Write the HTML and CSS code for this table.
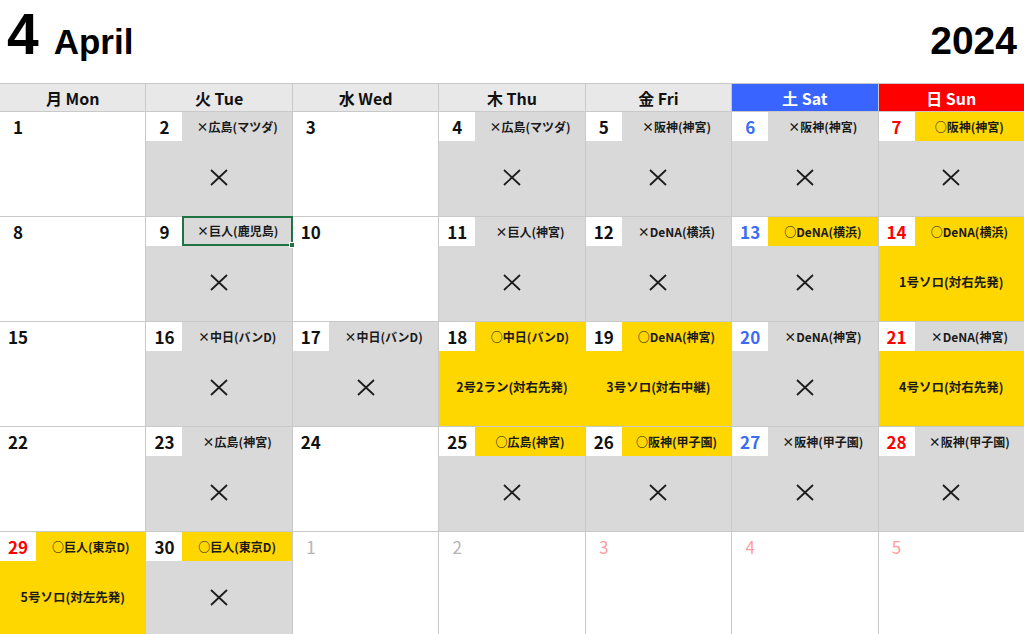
FILE: index.html
```html
<!DOCTYPE html>
<html lang="ja">
<head>
<meta charset="utf-8">
<link rel="stylesheet" href="styles.css">
</head>
<body>
<div class="title">
  <span class="mnum">4</span><span class="mname">April</span><span class="year">2024</span>
</div>
<div class="cal">
  <div class="hd">月 Mon</div>
  <div class="hd">火 Tue</div>
  <div class="hd">水 Wed</div>
  <div class="hd">木 Thu</div>
  <div class="hd">金 Fri</div>
  <div class="hd sat">土 Sat</div>
  <div class="hd sun">日 Sun</div>

  <!-- week 1 -->
  <div class="cell"><div class="num">1</div></div>
  <div class="cell"><div class="num">2</div><div class="lbl g">×広島(マツダ)</div><div class="body g"><svg class="x" viewBox="0 0 18 17"><path d="M1 1L17 16M17 1L1 16"/></svg></div></div>
  <div class="cell"><div class="num">3</div></div>
  <div class="cell"><div class="num">4</div><div class="lbl g">×広島(マツダ)</div><div class="body g"><svg class="x" viewBox="0 0 18 17"><path d="M1 1L17 16M17 1L1 16"/></svg></div></div>
  <div class="cell"><div class="num">5</div><div class="lbl g">×阪神(神宮)</div><div class="body g"><svg class="x" viewBox="0 0 18 17"><path d="M1 1L17 16M17 1L1 16"/></svg></div></div>
  <div class="cell"><div class="num blue">6</div><div class="lbl g">×阪神(神宮)</div><div class="body g"><svg class="x" viewBox="0 0 18 17"><path d="M1 1L17 16M17 1L1 16"/></svg></div></div>
  <div class="cell"><div class="num red">7</div><div class="lbl y">○阪神(神宮)</div><div class="body g"><svg class="x" viewBox="0 0 18 17"><path d="M1 1L17 16M17 1L1 16"/></svg></div></div>

  <!-- week 2 -->
  <div class="cell"><div class="num">8</div></div>
  <div class="cell"><div class="num">9</div><div class="lbl g sel">×巨人(鹿児島)<span class="handle"></span></div><div class="body g"><svg class="x" viewBox="0 0 18 17"><path d="M1 1L17 16M17 1L1 16"/></svg></div></div>
  <div class="cell"><div class="num">10</div></div>
  <div class="cell"><div class="num">11</div><div class="lbl g">×巨人(神宮)</div><div class="body g"><svg class="x" viewBox="0 0 18 17"><path d="M1 1L17 16M17 1L1 16"/></svg></div></div>
  <div class="cell"><div class="num">12</div><div class="lbl g">×DeNA(横浜)</div><div class="body g"><svg class="x" viewBox="0 0 18 17"><path d="M1 1L17 16M17 1L1 16"/></svg></div></div>
  <div class="cell"><div class="num blue">13</div><div class="lbl y">○DeNA(横浜)</div><div class="body g"><svg class="x" viewBox="0 0 18 17"><path d="M1 1L17 16M17 1L1 16"/></svg></div></div>
  <div class="cell"><div class="num red">14</div><div class="lbl y">○DeNA(横浜)</div><div class="body y">1号ソロ(対右先発)</div></div>

  <!-- week 3 -->
  <div class="cell"><div class="num">15</div></div>
  <div class="cell"><div class="num">16</div><div class="lbl g">×中日(バンD)</div><div class="body g"><svg class="x" viewBox="0 0 18 17"><path d="M1 1L17 16M17 1L1 16"/></svg></div></div>
  <div class="cell"><div class="num">17</div><div class="lbl g">×中日(バンD)</div><div class="body g"><svg class="x" viewBox="0 0 18 17"><path d="M1 1L17 16M17 1L1 16"/></svg></div></div>
  <div class="cell"><div class="num">18</div><div class="lbl y">○中日(バンD)</div><div class="body y">2号2ラン(対右先発)</div></div>
  <div class="cell"><div class="num">19</div><div class="lbl y">○DeNA(神宮)</div><div class="body y">3号ソロ(対右中継)</div></div>
  <div class="cell"><div class="num blue">20</div><div class="lbl g">×DeNA(神宮)</div><div class="body g"><svg class="x" viewBox="0 0 18 17"><path d="M1 1L17 16M17 1L1 16"/></svg></div></div>
  <div class="cell"><div class="num red">21</div><div class="lbl g">×DeNA(神宮)</div><div class="body y">4号ソロ(対右先発)</div></div>

  <!-- week 4 -->
  <div class="cell"><div class="num">22</div></div>
  <div class="cell"><div class="num">23</div><div class="lbl g">×広島(神宮)</div><div class="body g"><svg class="x" viewBox="0 0 18 17"><path d="M1 1L17 16M17 1L1 16"/></svg></div></div>
  <div class="cell"><div class="num">24</div></div>
  <div class="cell"><div class="num">25</div><div class="lbl y">○広島(神宮)</div><div class="body g"><svg class="x" viewBox="0 0 18 17"><path d="M1 1L17 16M17 1L1 16"/></svg></div></div>
  <div class="cell"><div class="num">26</div><div class="lbl y">○阪神(甲子園)</div><div class="body g"><svg class="x" viewBox="0 0 18 17"><path d="M1 1L17 16M17 1L1 16"/></svg></div></div>
  <div class="cell"><div class="num blue">27</div><div class="lbl g">×阪神(甲子園)</div><div class="body g"><svg class="x" viewBox="0 0 18 17"><path d="M1 1L17 16M17 1L1 16"/></svg></div></div>
  <div class="cell"><div class="num red">28</div><div class="lbl g">×阪神(甲子園)</div><div class="body g"><svg class="x" viewBox="0 0 18 17"><path d="M1 1L17 16M17 1L1 16"/></svg></div></div>

  <!-- week 5 -->
  <div class="cell"><div class="num red">29</div><div class="lbl y">○巨人(東京D)</div><div class="body y">5号ソロ(対左先発)</div></div>
  <div class="cell"><div class="num">30</div><div class="lbl y">○巨人(東京D)</div><div class="body g"><svg class="x" viewBox="0 0 18 17"><path d="M1 1L17 16M17 1L1 16"/></svg></div></div>
  <div class="cell"><div class="num next">1</div></div>
  <div class="cell"><div class="num next">2</div></div>
  <div class="cell"><div class="num next pink">3</div></div>
  <div class="cell"><div class="num next pink">4</div></div>
  <div class="cell"><div class="num next pink">5</div></div>
</div>
</body>
</html>
```

FILE: styles.css
```css
* { box-sizing: border-box; }
html, body {
  margin: 0;
  padding: 0;
  background: #fff;
}
body {
  font-family: "Noto Sans CJK JP", "Noto Sans", sans-serif;
  color: #111;
  overflow: hidden;
}
.title {
  height: 83px;
  display: flex;
  align-items: baseline;
  padding: 1px 7px 0 7px;
  line-height: normal;
  font-family: "Liberation Sans", Arial, sans-serif;
  font-weight: 700;
  color: #000;
}
.mnum {
  font-size: 57px;
}
.mname {
  font-size: 35px;
  margin-left: 15px;
}
.year {
  font-size: 39px;
  margin-left: auto;
}
.cal {
  display: grid;
  grid-template-columns: repeat(7, 1fr);
  grid-template-rows: 27px repeat(5, 104px);
  gap: 1px;
  background: #c9c9c9;
  border-top: 1px solid #c9c9c9;
}
.hd {
  background: #e8e8e8;
  font-weight: 700;
  font-size: 16px;
  display: flex;
  align-items: center;
  justify-content: center;
  color: #111;
  line-height: 1;
}
.hd.sat { background: #3a64ff; color: #fff; }
.hd.sun { background: #ff0000; color: #fff; }
.cell {
  background: #fff;
  display: grid;
  grid-template-columns: 36px 1fr;
  grid-template-rows: 29px 1fr;
}
.num {
  background: #fff;
  font-weight: 700;
  font-size: 17px;
  display: flex;
  align-items: center;
  justify-content: center;
  color: #111;
  line-height: 1;
}
.num.blue { color: #3a6cf4; }
.num.red { color: #ff0000; }
.num.next { font-weight: 400; color: #b4b4b4; background: transparent; }
.num.next.pink { color: #ff9d9d; }
.lbl {
  font-size: 12px;
  font-weight: 700;
  display: flex;
  align-items: center;
  justify-content: center;
  white-space: nowrap;
  color: #1a1a1a;
  line-height: 1;
  position: relative;
}
.lbl.sel {
  border: 2px solid #217346;
  margin: -1px -1px 0 0;
}
.handle {
  position: absolute;
  right: -4px;
  bottom: -4px;
  width: 6px;
  height: 6px;
  background: #217346;
  border: 1px solid #fff;
}
.g { background: #d9d9d9; }
.y { background: #ffd700; }
.body {
  grid-column: 1 / 3;
  display: flex;
  align-items: center;
  justify-content: center;
  font-size: 12.5px;
  font-weight: 700;
  color: #1a1a1a;
  line-height: 1;
  padding-bottom: 2px;
}
.x {
  width: 18px;
  height: 17px;
  fill: none;
  stroke: #1c1c1c;
  stroke-width: 1.8;
}
```
